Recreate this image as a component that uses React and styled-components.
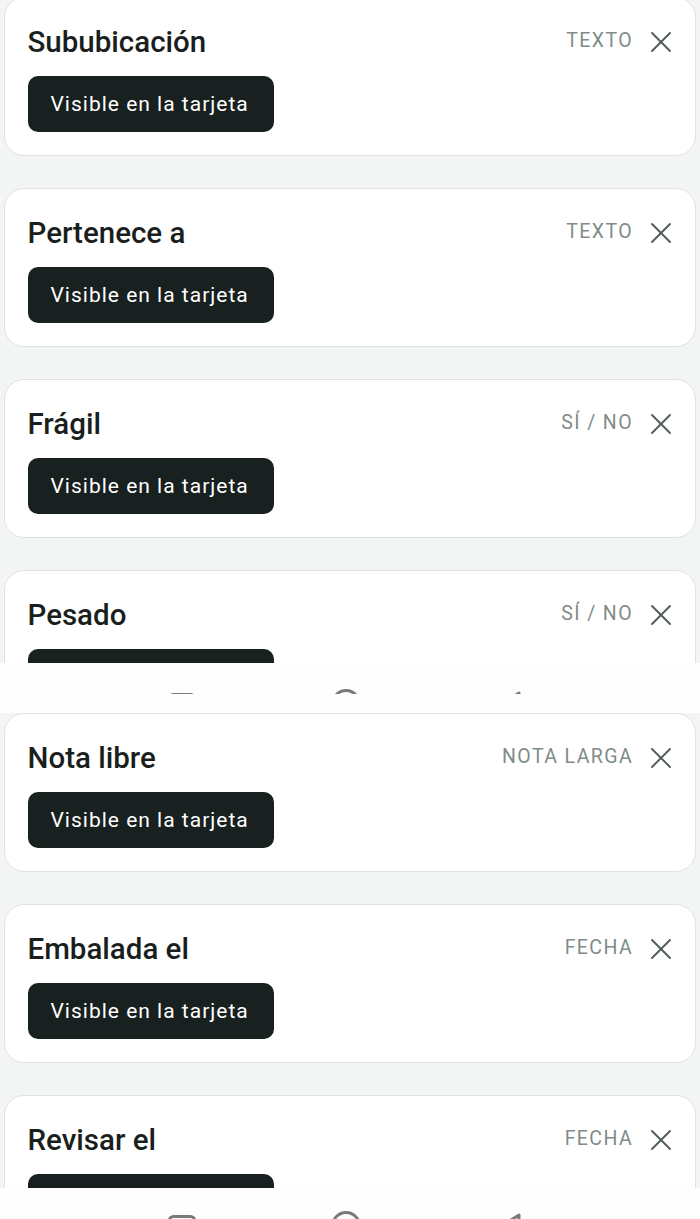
import React from 'react';
import styled, { createGlobalStyle } from 'styled-components';

const GlobalStyle = createGlobalStyle`
  html, body {
    margin: 0;
    padding: 0;
    background: #f3f5f4;
    font-family: Roboto, "Noto Sans", "Liberation Sans", sans-serif;
  }
`;

const Page = styled.div`
  width: 700px;
  height: 1219px;
  overflow: hidden;
  background: #f3f5f4;
  display: flex;
  flex-direction: column;
`;

const Section = styled.div`
  height: ${(p) => p.$height}px;
  overflow: hidden;
  padding: 0 4px;
  flex-shrink: 0;
`;

const List = styled.div`
  display: flex;
  flex-direction: column;
  gap: 32px;
  margin-top: ${(p) => p.$offset || 0}px;
`;

const Card = styled.div`
  box-sizing: border-box;
  height: 159px;
  background: #ffffff;
  border: 1.5px solid #dde3e1;
  border-radius: 20px;
  padding: 0 23px 0 22.5px;
  display: flex;
  flex-direction: column;
  flex-shrink: 0;
`;

const Header = styled.div`
  display: flex;
  align-items: center;
  height: 76px;
  padding-top: 12px;
  box-sizing: border-box;
`;

const Title = styled.div`
  flex: 1;
  font-size: 29.5px;
  font-weight: 500;
  color: #1a1f1e;
`;

const TypeLabel = styled.span`
  font-size: 19.5px;
  font-weight: 400;
  color: #7f8c88;
  letter-spacing: 1.4px;
  margin-right: 17px;
  margin-top: -3px;
`;

const CloseBtn = styled.button`
  border: none;
  background: none;
  padding: 0;
  width: 22px;
  height: 22px;
  display: flex;
  align-items: center;
  justify-content: center;
  color: #515d5a;
`;

const VisibleBtn = styled.button`
  align-self: flex-start;
  margin-top: 1.5px;
  height: 56px;
  width: 246px;
  border: none;
  border-radius: 10px;
  background: #182020;
  color: #ffffff;
  font-family: inherit;
  font-size: 21px;
  letter-spacing: 1px;
  padding: 0 23px;
  text-align: left;
  white-space: nowrap;
`;

const NavStrip = styled.div`
  height: ${(p) => p.$height}px;
  background: #fefefe;
  overflow: hidden;
  flex-shrink: 0;
`;

const NavClip = styled.div`
  margin-top: ${(p) => p.$top}px;
  height: ${(p) => p.$clip}px;
  overflow: hidden;
`;

const NavRow = styled.div`
  display: flex;
  align-items: flex-start;
  padding-left: 152px;
  gap: 104px;
`;

const NavSlot = styled.div`
  width: 60px;
  display: flex;
  justify-content: center;
  padding-top: ${(p) => p.$dy || 0}px;
`;

const CloseIcon = () => (
  <svg width="22" height="22" viewBox="0 0 22 22" fill="none" stroke="currentColor" strokeWidth="1.9" strokeLinecap="round">
    <line x1="2" y1="2" x2="20" y2="20" />
    <line x1="20" y1="2" x2="2" y2="20" />
  </svg>
);

const NavIcons = () => (
  <NavRow>
    <NavSlot $dy={4}>
      <svg width="28" height="26" viewBox="0 0 28 26" fill="none" stroke="#7a7a7a" strokeWidth="3">
        <rect x="1.5" y="1.5" width="25" height="23" rx="4" />
      </svg>
    </NavSlot>
    <NavSlot>
      <svg width="30" height="30" viewBox="0 0 30 30" fill="none" stroke="#7a7a7a" strokeWidth="3">
        <circle cx="15" cy="15" r="13.5" />
      </svg>
    </NavSlot>
    <NavSlot $dy={2}>
      <svg width="26" height="28" viewBox="0 0 26 28" fill="none" stroke="#7a7a7a" strokeWidth="3" strokeLinejoin="round">
        <path d="M22 2 L3 14 L22 26 Z" />
      </svg>
    </NavSlot>
  </NavRow>
);

const FieldCard = ({ title, type }) => (
  <Card>
    <Header>
      <Title>{title}</Title>
      <TypeLabel>{type}</TypeLabel>
      <CloseBtn aria-label="Eliminar">
        <CloseIcon />
      </CloseBtn>
    </Header>
    <VisibleBtn>Visible en la tarjeta</VisibleBtn>
  </Card>
);

const firstFields = [
  { title: 'Sububicación', type: 'TEXTO' },
  { title: 'Pertenece a', type: 'TEXTO' },
  { title: 'Frágil', type: 'SÍ / NO' },
  { title: 'Pesado', type: 'SÍ / NO' },
];

const secondFields = [
  { title: 'Nota libre', type: 'NOTA LARGA' },
  { title: 'Embalada el', type: 'FECHA' },
  { title: 'Revisar el', type: 'FECHA' },
];

export default function App() {
  return (
    <>
      <GlobalStyle />
      <Page>
        <Section $height={663}>
          <List $offset={-3}>
            {firstFields.map((f) => (
              <FieldCard key={f.title} {...f} />
            ))}
          </List>
        </Section>
        <NavStrip $height={50}>
          <NavClip $top={26} $clip={5}>
            <NavIcons />
          </NavClip>
        </NavStrip>
        <Section $height={475}>
          <List>
            {secondFields.map((f) => (
              <FieldCard key={f.title} {...f} />
            ))}
          </List>
        </Section>
        <NavStrip $height={31}>
          <NavClip $top={23} $clip={20}>
            <NavIcons />
          </NavClip>
        </NavStrip>
      </Page>
    </>
  );
}
